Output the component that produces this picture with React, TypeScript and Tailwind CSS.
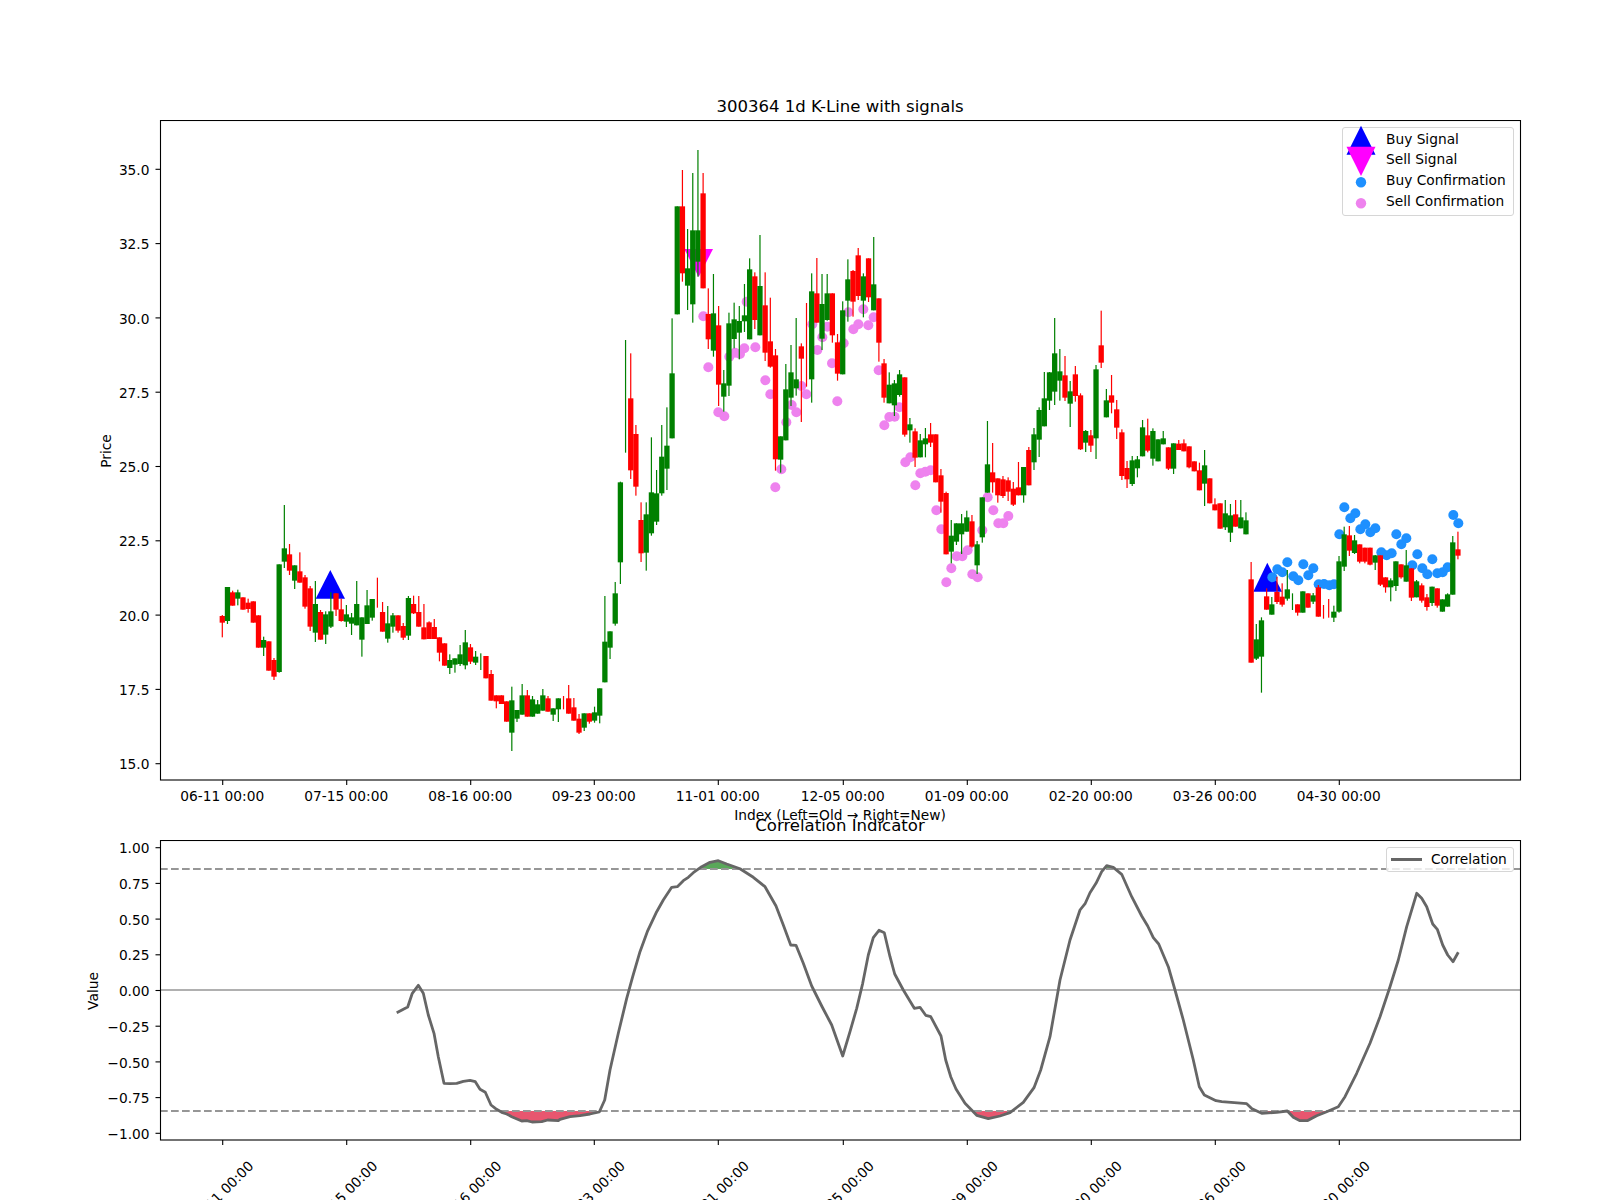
import * as React from "react";

type Row = [string, number, number, number, number];
type Candle = { x: number; color: string; hi: number; top: number; bot: number; lo: number };
type Pt = [number, number];

const GREEN = "#008000";
const RED = "#ff0000";

// candle rows are [colour, high, body top, body bottom, low], read off 3x crops
const SEG_A: Row[] = [
  ["r",525,528,548,592],["g",441,441,543,552],["r",452,457,497,497],["g",449,457,476,496],["r",472,472,509,509],
  ["r",476,488,507,518],["r",484,484,548,548],["r",526,526,623,623],["g",590,600,623,648],["r",604,604,692,692],
  ["r",654,660,710,720],["g",373,373,696,698],["g",195,325,365,384],["r",312,343,392,405],["g",376,376,422,447],
  ["r",337,394,428,428],["r",405,412,500,506],["r",438,445,560,573],["g",423,492,578,606],["r",510,516,599,599],
  ["g",514,523,584,612],["g",457,514,560,564],["r",460,460,509,528],["r",476,508,543,545],["g",495,523,545,561],
  ["g",519,532,551,585],["g",423,492,556,556],["g",532,532,599,650],["g",450,496,552,552],["g",477,477,533,542],
  ["r",413,458,458,503],["r",486,516,575,575],["g",498,550,596,608],["g",519,526,560,578],["r",526,526,572,578],
  ["r",549,558,593,600],["g",468,474,587,600],["r",467,492,520,522],["r",468,516,560,560],["r",492,562,598,598],
  ["r",544,547,597,597],["r",537,561,597,597],["r",592,592,638,664],["r",610,610,677,677],["g",643,660,684,702],
  ["g",655,655,674,698],["g",615,643,672,678],["g",570,607,676,688],["r",612,622,665,672],["g",633,650,668,675],
];
const SEG_B: Row[] = [
  ["g",280,300,300,330],["r",288,288,355,355],["r",330,342,422,422],["r",406,406,424,445],["r",406,406,432,432],
  ["r",424,424,485,485],["g",380,421,518,573],["g",450,450,476,486],["g",372,406,464,464],["r",390,406,470,470],
  ["g",408,418,470,470],["g",420,433,461,461],["g",387,406,452,452],["r",408,415,455,455],["g",445,445,464,483],
  ["g",415,415,448,486],["r",408,428,428,448],["r",375,415,461,461],["r",414,442,482,482],["r",462,476,518,522],
  ["g",460,460,503,513],["r",460,460,485,491],["g",440,457,482,488],["g",385,385,467,490],["g",108,245,367,367],
  ["g",214,214,263,297],["g",66,100,191,197],
];
const SEG_C: Row[] = [
  ["g",1055,1057,1297,1362],["g",630,800,800,968],["r",670,805,1021,1047],["r",885,912,1070,1097],["r",1117,1170,1270,1296],
  ["g",1117,1153,1268,1322],["g",922,1087,1210,1217],["g",1020,1090,1175,1185],["g",885,980,1090,1097],["g",832,947,1016,1080],
  ["g",565,730,925,925],["g",229,229,553,553],["r",120,229,430,455],["g",297,415,467,540],["g",129,301,523,578],
  ["g",60,301,395,440],["r",129,190,475,475],["r",475,552,628,657],["g",432,550,662,680],["r",528,586,764,828],
  ["g",720,760,800,845],["g",548,580,767,798],["g",518,568,627,655],["g",528,573,608,688],["g",462,556,574,606],
  ["g",385,418,628,628],["r",427,439,570,597],["g",315,468,616,616],["r",427,526,668,693],["r",503,634,710,713],
  ["r",657,676,988,1022],["g",919,919,989,1028],["g",702,778,931,931],["g",645,727,803,828],["g",564,748,775,797],
  ["r",640,649,686,876],["r",519,640,640,770],["g",430,484,748,818],["r",384,490,578,578],["g",432,522,626,660],
  ["g",432,490,570,572],["r",490,490,616,638],["r",612,637,731,752],["g",514,541,733,733],["g",388,448,512,575],
  ["r",420,423,515,560],["r",354,376,498,510],["g",430,439,512,562],["r",385,385,502,516],["g",321,463,541,541],
  ["r",505,505,638,695],["r",687,700,803,818],["g",727,764,820,820],["g",750,760,826,858],["g",720,733,795,800],
];
const SEG_D: Row[] = [
  ["r",262,262,434,440],["g",384,403,421,458],["r",415,424,503,531],["g",432,451,502,502],["g",414,445,463,502],
  ["r",399,433,458,471],["r",433,433,577,577],["r",537,556,635,668],["r",605,609,793,793],["g",690,737,785,820],
  ["g",700,700,755,765],["g",672,700,733,792],["g",662,682,725,725],["r",675,694,770,773],["g",753,763,826,852],
  ["g",622,622,742,758],["g",393,523,608,608],["r",459,547,577,608],["r",565,565,616,638],["r",558,568,618,624],
  ["r",562,571,605,633],["r",576,596,644,648],["r",516,592,616,616],["g",531,531,616,638],["r",471,480,586,586],
  ["g",414,433,517,540],["g",352,360,449,501],["g",246,325,409,409],["g",246,247,332,360],["g",84,190,305,345],
  ["g",177,244,272,332],["r",198,256,323,333],["g",273,304,341,411],["r",228,253,318,335],["r",310,316,478,480],
  ["g",420,423,458,486],["r",420,436,467,486],["g",225,238,445,507],["r",62,166,218,234],["g",297,331,382,382],
  ["r",255,316,338,370],["r",330,358,413,447],["r",418,427,558,570],["r",513,534,568,594],["g",498,511,582,588],
  ["g",498,508,535,562],["g",390,412,499,499],["r",386,436,482,487],["g",415,423,506,527],["g",448,448,514,514],
  ["g",423,445,463,463],["r",472,472,536,540],["g",460,460,536,552],["r",450,461,480,480],["r",448,460,484,484],
  ["r",469,469,532,535],["r",514,514,544,544],["r",518,541,601,601],["g",480,526,581,648],["r",565,565,640,640],
  ["r",625,643,661,661],["r",640,640,716,716],
];
const SEG_E: Row[] = [
  ["g",60,100,142,150],["g",72,106,158,186],["r",60,103,140,140],["g",60,112,145,145],["g",97,121,163,163],
  ["r",246,298,548,548],["g",432,478,536,540],["g",412,421,530,638],["r",325,349,389,389],["g",351,373,404,404],
  ["r",290,336,366,372],["r",310,350,374,380],["g",270,328,356,362],["g",340,365,365,390],["r",373,373,398,407],
  ["g",334,334,398,398],["r",340,340,383,383],["g",339,346,365,372],["r",315,322,410,410],["r",375,395,395,416],
  ["r",357,385,385,413],["g",377,395,413,426],["g",228,244,395,398],["g",140,163,260,273],["r",138,166,212,228],
  ["g",165,181,219,222],["r",193,193,245,250],["r",203,203,245,250],["r",203,203,254,256],["g",225,226,248,270],
  ["r",226,226,314,318],["r",292,292,322,338],["g",295,301,322,364],["g",244,244,318,333],["r",253,253,292,296],
  ["g",210,256,305,305],["r",265,265,353,363],["g",300,304,352,352],["r",310,316,362,368],["r",342,352,381,392],
  ["g",320,320,369,378],["r",325,325,377,383],["g",358,358,395,395],["g",340,343,380,380],["g",168,187,344,344],
  ["r",155,208,227,238],
];

const toRows = (y0: number, rows: Row[]): Row[] =>
  rows.map(([c, hi, top, bot, lo]) => [c, y0 + hi / 3, y0 + top / 3, y0 + bot / 3, y0 + lo / 3]);

const CANDLES: Candle[] = [
  ...toRows(440, SEG_A),
  ...toRows(560, SEG_B),
  ...toRows(130, SEG_C),
  ...toRows(290, SEG_D),
  ...toRows(480, SEG_E),
].map(([c, hi, top, bot, lo], i) => ({
  x: 222.3 + 5.17 * i,
  color: c === "g" ? GREEN : RED,
  hi,
  top,
  bot,
  lo,
}));

const fromCrop = (x0: number, y0: number, pts: Pt[]): Pt[] => pts.map(([x, y]) => [x0 + x / 3, y0 + y / 3]);

const SELL_DOTS: Pt[] = [
  ...fromCrop(600, 130, [
    [310,559],[325,712],[355,847],[373,859],[388,680],[405,668],[420,672],[433,655],[466,652],[440,515],[496,751],[511,793],
    [526,1072],[544,1018],[559,877],[575,825],[589,847],[604,768],[619,793],[637,583],[652,660],[667,622],[682,590],[696,700],
    [712,814],[731,640],[745,547],[760,598],[775,583],[790,538],[805,586],[821,562],[836,721],[853,886],[868,861],[884,860],[898,832],
  ]),
  ...fromCrop(900, 290, [
    [16,517],[31,502],[46,586],[61,550],[76,545],[92,541],[109,661],[124,718],[139,877],[154,835],[170,799],[187,799],[203,781],
    [217,853],[233,862],[247,721],[263,622],[280,661],[295,700],[310,700],[325,678],
  ]),
];

const BUY_DOTS: Pt[] = fromCrop(1220, 480, [
  [157,292],[172,268],[187,277],[202,247],[220,289],[235,301],[250,253],[265,286],[280,265],[296,313],[312,312],[328,316],[342,313],
  [358,163],[373,82],[391,115],[406,100],[421,148],[436,133],[451,157],[466,145],[484,217],[500,226],[515,220],[529,163],[544,193],
  [559,175],[577,256],[592,223],[607,265],[622,283],[637,238],[652,280],[668,277],[683,262],[700,105],[715,130],
]);

const CORR: Pt[] = [
  ...fromCrop(80, 770, [
    [950,728],[983,711],[997,670],[1015,646],[1030,670],[1045,735],[1062,790],[1075,860],[1092,940],[1110,941],[1130,940],[1150,934],
    [1170,931],[1186,935],[1200,958],[1216,967],[1233,1005],[1247,1016],[1265,1027],[1280,1032],[1295,1040],[1325,1053],[1340,1052],
    [1356,1056],[1385,1055],[1403,1050],[1435,1052],
  ]),
  ...fromCrop(560, 770, [
    [0,1048],[30,1040],[60,1037],[90,1032],[118,1026],[134,990],[150,900],[175,790],[200,685],[218,620],[240,545],[262,485],[290,425],
    [310,390],[335,352],[352,350],[370,332],[385,322],[400,308],[425,290],[450,277],[475,272],[500,282],[540,296],[580,322],[615,350],
    [648,408],[670,465],[692,525],[708,526],[730,580],[755,648],[785,708],[815,765],[848,858],[870,785],[890,715],[908,640],[925,555],
    [940,503],[957,481],[973,488],[990,560],[1004,612],[1030,660],[1063,715],[1080,712],[1097,736],[1112,740],[1143,798],[1157,870],
    [1172,920],[1188,957],[1215,1000],[1250,1036],[1285,1046],[1320,1038],[1350,1028],[1390,997],[1422,953],[1442,900],[1470,800],
  ]),
  ...fromCrop(1050, 770, [
    [30,630],[60,510],[90,420],[106,400],[120,368],[138,340],[155,305],[170,287],[190,292],[215,313],[245,380],[275,438],[293,468],
    [310,503],[326,522],[355,590],[375,660],[400,750],[430,870],[448,950],[463,975],[498,992],[515,995],[590,1001],[606,1016],[635,1030],
    [680,1027],[712,1023],[730,1042],[750,1052],[772,1052],[800,1037],[830,1025],[865,1010],[885,980],[920,910],[960,820],[990,740],
    [1020,650],[1045,570],[1070,470],[1100,370],[1115,385],[1130,410],[1148,462],[1162,478],[1178,525],[1193,555],[1209,575],[1225,547],
  ]),
];

const X_TICKS: [number, string][] = [
  [222.7, "06-11 00:00"],
  [346.7, "07-15 00:00"],
  [470.7, "08-16 00:00"],
  [594.3, "09-23 00:00"],
  [718.3, "11-01 00:00"],
  [843.3, "12-05 00:00"],
  [967.3, "01-09 00:00"],
  [1091.3, "02-20 00:00"],
  [1215.3, "03-26 00:00"],
  [1339.3, "04-30 00:00"],
];

const PRICE_TICKS = ["35.0", "32.5", "30.0", "27.5", "25.0", "22.5", "20.0", "17.5", "15.0"].map(
  (label, i) => [169.3 + 74.3 * i, label] as [number, string],
);
const VALUE_TICKS = ["1.00", "0.75", "0.50", "0.25", "0.00", "−0.25", "−0.50", "−0.75", "−1.00"].map(
  (label, i) => [847.7 + 35.7 * i, label] as [number, string],
);

const linePath = CORR.map(([x, y], i) => `${i ? "L" : "M"}${x.toFixed(1)} ${y.toFixed(1)}`).join("");
const fillPath = (level: number) => `${linePath}L${CORR[CORR.length - 1][0].toFixed(1)} ${level}L${CORR[0][0].toFixed(1)} ${level}Z`;

function AxesFrame({ top, bottom, yTicks }: { top: number; bottom: number; yTicks: [number, string][] }) {
  return (
    <g>
      <rect x="160.5" y={top} width="1360" height={bottom - top} fill="none" stroke="#000" strokeWidth="1.1" />
      {yTicks.map(([y, label]) => (
        <g key={label}>
          <line x1="155.5" x2="160.5" y1={y} y2={y} stroke="#000" strokeWidth="1.1" />
          <text x="149.5" y={y + 5.6} textAnchor="end" className="text-[13.75px]">
            {label}
          </text>
        </g>
      ))}
      {X_TICKS.map(([x]) => (
        <line key={x} x1={x} x2={x} y1={bottom} y2={bottom + 5} stroke="#000" strokeWidth="1.1" />
      ))}
    </g>
  );
}

function PriceChart() {
  return (
    <svg viewBox="80 120 1450 720" className="block h-[720px] w-[1450px]">
      <polygon points="315.7,598.7 345,598.7 330.3,570" fill="#0000ff" />
      <polygon points="1253.3,591.7 1282,591.7 1267.3,562.7" fill="#0000ff" />
      <polygon points="684.3,249 713,249 698.7,277" fill="#ff00ff" />
      {SELL_DOTS.map(([x, y], i) => (
        <circle key={i} cx={x} cy={y} r="5" fill="#ee82ee" />
      ))}
      {BUY_DOTS.map(([x, y], i) => (
        <circle key={i} cx={x} cy={y} r="5" fill="#1e90ff" />
      ))}
      {CANDLES.map((c, i) => (
        <g key={i} fill={c.color}>
          <rect x={c.x - 0.6} y={c.hi} width="1.2" height={c.lo - c.hi} />
          {c.bot > c.top && <rect x={c.x - 2.65} y={c.top} width="5.3" height={c.bot - c.top} />}
        </g>
      ))}
      <AxesFrame top={120.5} bottom={780} yTicks={PRICE_TICKS} />
      {X_TICKS.map(([x, label]) => (
        <text key={label} x={x - 0.5} y="801" textAnchor="middle" className="text-[13.75px]">
          {label}
        </text>
      ))}
      <text x="840" y="820" textAnchor="middle" className="text-[13.75px]">
        Index (Left=Old → Right=New)
      </text>
      <text transform="translate(110.5 451) rotate(-90)" textAnchor="middle" className="text-[13.75px]">
        Price
      </text>
    </svg>
  );
}

function CorrelationChart() {
  return (
    <svg viewBox="80 840 1450 360" className="block h-[360px] w-[1450px]">
      <defs>
        <clipPath id="below-low">
          <rect x="160" y="1111" width="1360" height="29" />
        </clipPath>
        <clipPath id="above-high">
          <rect x="160" y="840" width="1360" height="29" />
        </clipPath>
      </defs>
      <path d={fillPath(1111)} fill="#e8566f" clipPath="url(#below-low)" />
      <path d={fillPath(869)} fill="#5aa85a" clipPath="url(#above-high)" />
      <line x1="160" x2="1520" y1="990" y2="990" stroke="#b0b0b0" strokeWidth="2" />
      <line x1="160" x2="1520" y1="869" y2="869" stroke="#969696" strokeWidth="2" strokeDasharray="7.7 3.3" />
      <line x1="160" x2="1520" y1="1111" y2="1111" stroke="#969696" strokeWidth="2" strokeDasharray="7.7 3.3" />
      <path d={linePath} fill="none" stroke="#666666" strokeWidth="2.8" strokeLinejoin="round" />
      <AxesFrame top={840.5} bottom={1140} yTicks={VALUE_TICKS} />
      {X_TICKS.map(([x, label]) => (
        <text
          key={label}
          transform={`translate(${x - 1.5} 1193) rotate(-45)`}
          textAnchor="middle"
          dy="5"
          className="text-[13.75px]"
        >
          {label}
        </text>
      ))}
      <text transform="translate(98 991) rotate(-90)" textAnchor="middle" className="text-[13.75px]">
        Value
      </text>
    </svg>
  );
}

function SignalMarker({ kind }: { kind: "buy" | "sell" | "buyDot" | "sellDot" }) {
  return (
    <svg viewBox="0 0 30 20" className="ml-[3.3px] h-[20px] w-[30px] overflow-visible">
      {kind === "buy" && <polygon points="15,-3.3 0.5,25.7 29.5,25.7" fill="#0000ff" />}
      {kind === "sell" && <polygon points="0.5,-3.3 29.5,-3.3 15,26" fill="#ff00ff" />}
      {kind === "buyDot" && <circle cx="15" cy="11.3" r="5.2" fill="#1e90ff" />}
      {kind === "sellDot" && <circle cx="15" cy="11.3" r="5.2" fill="#ee82ee" />}
    </svg>
  );
}

function SignalLegend() {
  const rows = [
    ["buy", "Buy Signal"],
    ["sell", "Sell Signal"],
    ["buyDot", "Buy Confirmation"],
    ["sellDot", "Sell Confirmation"],
  ] as const;
  return (
    <div className="absolute top-[7px] left-[1262px] flex h-[89px] w-[172px] flex-col rounded-[3px] border border-[#d6d6d6] bg-white/80 pt-[1px]">
      {rows.map(([kind, label]) => (
        <div key={kind} className="flex h-[20.8px] items-center">
          <SignalMarker kind={kind} />
          <span className="ml-[9.7px] text-[13.75px] leading-none whitespace-nowrap">{label}</span>
        </div>
      ))}
    </div>
  );
}

export default function App() {
  return (
    <main className="h-[1200px] w-[1600px] overflow-hidden bg-white pl-[80px] font-['DejaVu_Sans',sans-serif] text-black">
      <h1 className="ml-[80px] flex h-[120px] w-[1360px] items-end justify-center pb-[3px] text-[16.55px] leading-[20px] font-normal">
        300364 1d K-Line with signals
      </h1>
      <section className="relative w-[1450px]">
        <PriceChart />
        <SignalLegend />
      </section>
      <section className="relative w-[1450px]">
        <h2 className="absolute top-[-28px] left-[80px] flex h-[28px] w-[1360px] items-center justify-center text-[16.55px] font-normal">
          Correlation Indicator
        </h2>
        <CorrelationChart />
        <div className="absolute top-[7px] left-[1306px] flex h-[25px] w-[128px] items-center rounded-[3px] border border-[#d6d6d6] bg-white/80">
          <span className="ml-[4px] h-[3px] w-[31px] bg-[#666666]" />
          <span className="ml-[9px] text-[13.75px] leading-none">Correlation</span>
        </div>
      </section>
    </main>
  );
}
